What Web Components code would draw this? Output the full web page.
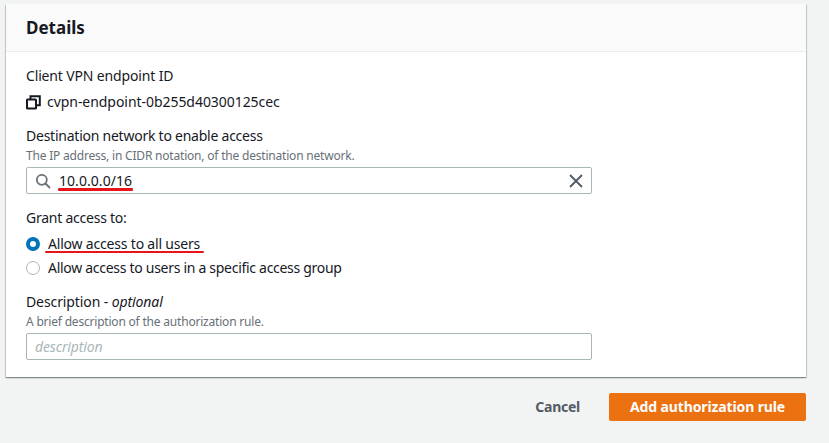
<!DOCTYPE html>
<html><head><meta charset="utf-8"><title>Details</title>
<style>
html,body{margin:0;padding:0;background:#f2f3f3;}
body{width:829px;height:443px;overflow:hidden;font:14px/20px "Noto Sans","Open Sans",sans-serif;color:#16191f;}
</style></head><body>
<template id="t-page"><style>
:host{display:flex;flex-direction:column;padding:4px 23px 0 6px;box-sizing:border-box;width:829px;height:443px}
.actions{display:flex;justify-content:flex-end;align-items:center;gap:29px;margin-top:16px}
</style><slot></slot><div class="actions"><slot name="actions"></slot></div></template>

<template id="t-card"><style>
:host{display:block;background:#fff;box-shadow:0 1px 1px 0 rgba(0,28,36,.3),1px 1px 1px 0 rgba(0,28,36,.15),-1px 1px 1px 0 rgba(0,28,36,.15)}
header{background:#fafafa;border-bottom:1px solid #eaeded;height:47px;padding:0 20px;display:flex;align-items:center;font-size:17px;font-weight:700}
.body{padding:14px 214px 17px 20px;display:flex;flex-direction:column}
</style><header><slot name="title"></slot></header><div class="body"><slot></slot></div></template>

<template id="t-field"><style>
:host{display:block;margin-bottom:var(--mb,13px)}
.l{line-height:20px;font-size:14px;letter-spacing:var(--ls,-.24px)}
.d{font-size:12px;line-height:17px;padding-top:1px;color:#687078;letter-spacing:-.2px;margin-bottom:3px}
</style><div class="l"><slot name="label"></slot></div><div class="d"><slot name="desc"></slot></div><slot></slot></template>

<template id="t-input"><style>
:host{display:flex;align-items:center;height:27px;box-sizing:border-box;border:1px solid #aab7b8;border-radius:2px;background:#fff;position:relative;padding:0 8px;gap:8px}
.v{flex:1;font-size:14px;letter-spacing:.05px}
:host([placeholder]) .v{color:#aab7b8;font-style:italic;letter-spacing:-.15px}
</style><slot name="start"></slot><span class="v"><slot></slot></span><slot name="end"></slot></template>

<template id="t-radio"><style>
:host{display:flex;align-items:center;gap:8px;height:24px;font-size:14px;letter-spacing:var(--ls,-.29px);position:relative}
i{width:14px;height:14px;border-radius:50%;box-sizing:border-box;border:1.5px solid #aab7b8;background:#fff;flex:none}
:host([checked]) i{border:4px solid #0073bb}
</style><i></i><span><slot></slot></span></template>

<template id="t-mark"><style>
:host{display:inline;position:relative}
b{position:absolute;left:var(--l,0);right:var(--r,0);bottom:var(--b,-2px);height:2.5px;background:#e8141c;border-radius:1px}
</style><slot></slot><b></b></template>

<template id="t-btn"><style>
:host{display:flex;align-items:center;justify-content:center;height:28px;font-size:14px;font-weight:700;color:#545b64;letter-spacing:-.25px}
:host([primary]){background:#ec7211;color:#fff;width:197px;border-radius:2px;letter-spacing:-.12px}
</style><slot></slot></template>

<x-page>
  <x-card>
    <span slot="title">Details</span>
    <x-field style="--mb:0;--ls:-.15px">
      <span slot="label">Client VPN endpoint ID</span>
    </x-field>
    <div style="display:flex;align-items:center;gap:6px;height:20px;margin:2px 0 14px;font-size:14px;letter-spacing:-.05px">
      <svg width="15" height="15" viewBox="0 0 15 15" fill="none" stroke="#16191f" stroke-width="2"><rect x="1" y="4.5" width="9" height="9" rx=".5"/><path d="M4.5 4V1.2h9.3v9H10.5"/></svg>
      <span>cvpn-endpoint-0b255d40300125cec</span>
    </div>
    <x-field style="--mb:14px">
      <span slot="label">Destination network to enable access</span>
      <span slot="desc">The IP address, in CIDR notation, of the destination network.</span>
      <x-input>
        <svg slot="start" width="16" height="16" viewBox="0 0 16 16" fill="none" stroke="#687078" stroke-width="1.8" stroke-linecap="round"><circle cx="6.8" cy="6.8" r="5"/><path d="M10.5 10.5L14.5 14.5"/></svg>
        <x-mark style="--l:-1px;--r:-1px;--b:-1px">10.0.0.0/16</x-mark>
        <svg slot="end" width="14" height="14" viewBox="0 0 14 14" fill="none" stroke="#545b64" stroke-width="1.9"><path d="M1 1L13 13M13 1L1 13"/></svg>
      </x-input>
    </x-field>
    <x-field style="--mb:12px">
      <span slot="label">Grant access to:</span>
      <x-radio checked style="--ls:-.19px"><x-mark style="--l:-3px;--r:-4px;--b:0px">Allow access to all users</x-mark></x-radio>
      <x-radio>Allow access to users in a specific access group</x-radio>
    </x-field>
    <x-field style="--mb:0;--ls:-.1px">
      <span slot="label">Description - <em>optional</em></span>
      <span slot="desc">A brief description of the authorization rule.</span>
      <x-input placeholder>description</x-input>
    </x-field>
  </x-card>
  <x-btn slot="actions">Cancel</x-btn>
  <x-btn slot="actions" primary>Add authorization rule</x-btn>
</x-page>
<script>
for (const [name, id] of [["x-page","t-page"],["x-card","t-card"],["x-field","t-field"],["x-input","t-input"],["x-radio","t-radio"],["x-mark","t-mark"],["x-btn","t-btn"]]) {
  customElements.define(name, class extends HTMLElement {
    constructor(){super();this.attachShadow({mode:"open"}).appendChild(document.getElementById(id).content.cloneNode(true));}
  });
}
</script>
</body></html>
